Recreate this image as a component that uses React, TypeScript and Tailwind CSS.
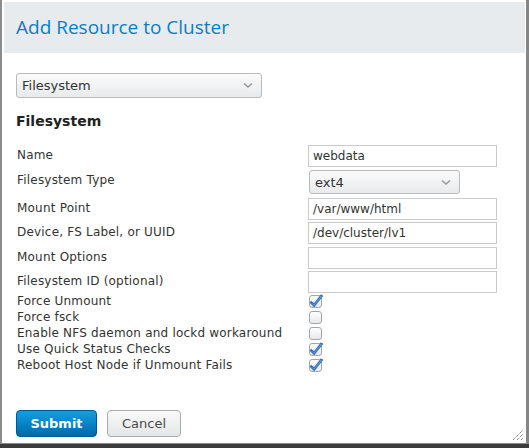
import React from 'react';

const fields = [
  { label: 'Name', value: 'webdata', h: 'h-[25px]' },
  { label: 'Filesystem Type', value: 'ext4', select: true, h: 'h-[28px]' },
  { label: 'Mount Point', value: '/var/www/html', h: 'h-[24px]' },
  { label: 'Device, FS Label, or UUID', value: '/dev/cluster/lv1', h: 'h-[25px]' },
  { label: 'Mount Options', value: '', h: 'h-[24px]' },
  { label: 'Filesystem ID (optional)', value: '', h: 'h-[22px]' },
];

const checks = [
  { label: 'Force Unmount', checked: true },
  { label: 'Force fsck', checked: false },
  { label: 'Enable NFS daemon and lockd workaround', checked: false },
  { label: 'Use Quick Status Checks', checked: true },
  { label: 'Reboot Host Node if Unmount Fails', checked: true },
];

function Chevron() {
  return (
    <svg width="10" height="7" viewBox="0 0 10 7" className="shrink-0">
      <path d="M1 1.5 L5 5 L9 1.5" fill="none" stroke="#9a9a9a" strokeWidth="1.6" />
    </svg>
  );
}

function CheckBox({ checked }: { checked: boolean }) {
  return (
    <svg width="14" height="14" viewBox="0 0 14 14">
      <defs>
        <linearGradient id="cbg" x1="0" y1="0" x2="0" y2="1">
          <stop offset="0" stopColor="#ffffff" />
          <stop offset="1" stopColor="#e6e8ea" />
        </linearGradient>
      </defs>
      <rect x="0.5" y="1.5" width="12" height="12" rx="2.5" fill="url(#cbg)" stroke="#a4a7aa" />
      {checked && (
        <path
          d="M2 7.5 L5 10 L12 1 L13.5 2 L5.3 12.5 L1.5 8.8 Z"
          fill="#7aaae0"
          stroke="#2d6cbd"
          strokeWidth="1.1"
          strokeLinejoin="round"
        />
      )}
    </svg>
  );
}

export default function App() {
  return (
    <div className="w-[529px] h-[448px] bg-[#3b3b3b] overflow-hidden" style={{ fontFamily: '"DejaVu Sans", sans-serif' }}>
      <div className="h-[444px] bg-white border-l-2 border-r-[3px] border-b border-l-[#8c8c8c] border-r-[#858585] border-b-[#8a8a8a] pt-[2px] pl-[2px] pr-[1px] flex flex-col relative">
        {/* Header */}
        <div className="h-[51px] bg-[#e7ebee] flex items-center pl-[12px] shrink-0">
          <h1 className="text-[19px] text-[#0b7ec3] leading-none" style={{ fontFamily: '"Open Sans", sans-serif' }}>
            Add Resource to Cluster
          </h1>
        </div>

        <div className="pl-[12px] pt-[20px]">
          {/* Resource type select */}
          <div className="w-[246px] h-[25px] rounded-[3px] border border-[#b8babc] bg-gradient-to-b from-[#fbfbfb] to-[#e8eaec] flex items-center justify-between pl-[5px] pr-[8px]">
            <span className="text-[13px] text-[#333]">Filesystem</span>
            <Chevron />
          </div>

          <h2 className="mt-[14px] text-[14px] font-bold text-[#222] leading-[18px]">Filesystem</h2>

          {/* Fields */}
          <div className="mt-[15px] flex flex-col text-[12px] text-[#333]">
            {fields.map((f) => (
              <div key={f.label} className={`flex items-start ${f.h}`}>
                <div className="w-[292px] pl-[1px] leading-[21px] tracking-[0.2px]">{f.label}</div>
                {f.select ? (
                  <div className="w-[151px] h-[24px] rounded-[3px] border border-[#b8babc] bg-gradient-to-b from-[#fbfbfb] to-[#e8eaec] flex items-center justify-between pl-[5px] pr-[8px] ml-[1px]">
                    <span className="text-[13px] text-[#333] mt-[2px]">{f.value}</span>
                    <Chevron />
                  </div>
                ) : (
                  <div className="w-[189px] h-[22px] border border-[#c9cbcd] bg-white flex items-center pl-[4px] text-[#333]">
                    {f.value}
                  </div>
                )}
              </div>
            ))}
          </div>

          {/* Checkboxes */}
          <div className="flex flex-col text-[12px] text-[#333]">
            {checks.map((c) => (
              <div key={c.label} className="flex items-center h-[16px]">
                <div className="w-[293px] pl-[1px] tracking-[0.2px]">{c.label}</div>
                <CheckBox checked={c.checked} />
              </div>
            ))}
          </div>

          {/* Buttons */}
          <div className="flex gap-[10px] mt-[37px]">
            <button className="w-[81px] h-[27px] rounded-[4px] border border-[#00598d] bg-gradient-to-b from-[#12a0e3] to-[#0069aa] text-white text-[13px] font-bold">
              Submit
            </button>
            <button className="w-[74px] h-[27px] rounded-[4px] border border-[#a9abad] bg-gradient-to-b from-[#fafafa] to-[#e3e5e7] text-[#4a4a4a] text-[13px]">
              Cancel
            </button>
          </div>
        </div>

        {/* Resize grip */}
        <svg width="12" height="12" viewBox="0 0 12 12" className="absolute right-[2px] bottom-[2px]">
          <path d="M1 11 L11 1 M5 11 L11 5 M9 11 L11 9" stroke="#555" strokeWidth="1" strokeDasharray="1 1" />
        </svg>
      </div>
    </div>
  );
}
